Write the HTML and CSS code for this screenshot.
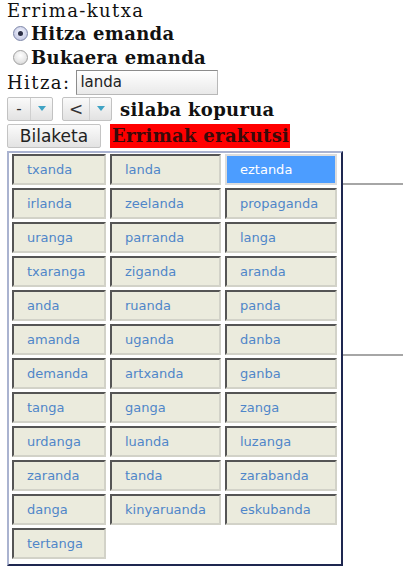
FILE: index.html
```html
<!DOCTYPE html>
<html lang="eu">
<head>
<meta charset="utf-8">
<title>Errima-kutxa</title>
<link rel="stylesheet" href="styles.css">
</head>
<body>
<form class="rhyme-form">
  <div class="title">Errima-kutxa</div>
  <label class="radio-row"><span class="radio checked"></span>Hitza emanda</label>
  <label class="radio-row"><span class="radio"></span>Bukaera emanda</label>
  <div class="word-row">
    <span class="word-label">Hitza:</span>
    <span class="text-input">landa</span>
  </div>
  <div class="syllable-row">
    <span class="select select-count"><span class="select-value">-</span><span class="select-arrow"></span></span>
    <span class="select select-op"><span class="select-value">&lt;</span><span class="select-arrow"></span></span>
    <span class="syllable-label">silaba kopurua</span>
  </div>
  <div class="action-row">
    <span class="button">Bilaketa</span>
    <span class="show-rhymes">Errimak erakutsi</span>
  </div>
</form>

<div class="results">
  <div class="rule rule-top"></div>
  <div class="rule rule-mid"></div>
  <div class="rhyme-grid">
    <div class="cell">txanda</div>
    <div class="cell">landa</div>
    <div class="cell active">eztanda</div>
    <div class="cell">irlanda</div>
    <div class="cell">zeelanda</div>
    <div class="cell">propaganda</div>
    <div class="cell">uranga</div>
    <div class="cell">parranda</div>
    <div class="cell">langa</div>
    <div class="cell">txaranga</div>
    <div class="cell">ziganda</div>
    <div class="cell">aranda</div>
    <div class="cell">anda</div>
    <div class="cell">ruanda</div>
    <div class="cell">panda</div>
    <div class="cell">amanda</div>
    <div class="cell">uganda</div>
    <div class="cell">danba</div>
    <div class="cell">demanda</div>
    <div class="cell">artxanda</div>
    <div class="cell">ganba</div>
    <div class="cell">tanga</div>
    <div class="cell">ganga</div>
    <div class="cell">zanga</div>
    <div class="cell">urdanga</div>
    <div class="cell">luanda</div>
    <div class="cell">luzanga</div>
    <div class="cell">zaranda</div>
    <div class="cell">tanda</div>
    <div class="cell">zarabanda</div>
    <div class="cell">danga</div>
    <div class="cell">kinyaruanda</div>
    <div class="cell">eskubanda</div>
    <div class="cell">tertanga</div>
  </div>
</div>
</body>
</html>
```

FILE: styles.css
```css
html, body {
  margin: 0;
  padding: 0;
  background: #fff;
}

body {
  padding: 0 0 0 7px;
  font-family: "DejaVu Serif", serif;
  font-size: 18px;
  color: #111;
}

.rhyme-form {
  display: flex;
  flex-direction: column;
}

.title {
  height: 21px;
  line-height: 21px;
  letter-spacing: 1.4px;
}

.radio-row {
  display: flex;
  align-items: center;
  height: 24px;
  padding-left: 6px;
  font-weight: bold;
  letter-spacing: 0.3px;
}

.radio {
  width: 15px;
  height: 15px;
  border-radius: 50%;
  border: 1px solid #a0a0a0;
  background: radial-gradient(circle at 50% 35%, #ffffff 0%, #e6e6e6 60%, #c6c6c6 100%);
  margin-right: 3px;
  position: relative;
  box-sizing: border-box;
}

.radio.checked {
  border-color: #7d86a8;
  background: radial-gradient(circle at 50% 40%, #f4f6ff 0%, #c9cde6 70%, #a3a9c8 100%);
}

.radio.checked::after {
  content: "";
  position: absolute;
  left: 4px;
  top: 4px;
  width: 5px;
  height: 5px;
  border-radius: 50%;
  background: #2c2f45;
}

.word-row {
  display: flex;
  align-items: center;
  height: 26px;
  gap: 6px;
}

.word-label {
  letter-spacing: 1.4px;
}

.text-input {
  width: 142px;
  height: 25px;
  box-sizing: border-box;
  border: 1px solid #b8b8b8;
  border-top-color: #8c8c8c;
  border-left-color: #8c8c8c;
  background: linear-gradient(#ffffff, #e9e9e9);
  font-family: "DejaVu Sans", sans-serif;
  font-size: 15px;
  line-height: 23px;
  padding-left: 3px;
  color: #222;
}

.syllable-row {
  display: flex;
  align-items: center;
  height: 28px;
  gap: 9px;
}

.select {
  display: flex;
  height: 24px;
  box-sizing: border-box;
  border: 1px solid #c2c2c2;
  border-radius: 2px;
  background: linear-gradient(#fafafa, #e2e2e2);
  font-family: "DejaVu Sans", sans-serif;
  font-size: 15px;
  color: #333;
}

.select-value {
  display: flex;
  align-items: center;
  justify-content: center;
  border-right: 1px solid #cfcfcf;
}

.select-count .select-value { width: 22px; }
.select-op .select-value { width: 26px; font-size: 17px; }

.select-arrow {
  width: 21px;
  position: relative;
}

.select-arrow::after {
  content: "";
  position: absolute;
  left: 7px;
  top: 8px;
  border-left: 4px solid transparent;
  border-right: 4px solid transparent;
  border-top: 5px solid #3fa3c4;
}

.syllable-label {
  font-weight: bold;
  letter-spacing: 0.3px;
  margin-left: -1px;
}

.action-row {
  display: flex;
  align-items: center;
  height: 26px;
  gap: 9px;
}

.button {
  width: 94px;
  height: 24px;
  box-sizing: border-box;
  border: 1px solid #c4c4c4;
  border-radius: 2px;
  background: linear-gradient(#fbfbfb, #e3e3e3);
  font-family: "DejaVu Sans", sans-serif;
  font-size: 17px;
  color: #222;
  display: flex;
  align-items: center;
  justify-content: center;
}

.show-rhymes {
  background: #ff0000;
  color: #3a0a0a;
  font-weight: bold;
  height: 24px;
  line-height: 24px;
  padding: 0 1px 0 2px;
  letter-spacing: 0.3px;
}

.results {
  position: relative;
  margin-top: 2px;
}

.rule {
  position: absolute;
  left: 330px;
  width: 80px;
  height: 2px;
  background: #a6a6a6;
}

.rule-top { top: 32px; }
.rule-mid { top: 203px; }

.rhyme-grid {
  position: relative;
  width: 336px;
  box-sizing: border-box;
  border: 2px solid;
  border-color: #aab3d0 #1e2750 #1e2750 #aab3d0;
  background: #fff;
  padding: 1px 4px 5px 3px;
  display: grid;
  grid-template-columns: 94px 111px 112px;
  grid-auto-rows: 31px;
  column-gap: 4px;
  row-gap: 3px;
}

.cell {
  box-sizing: border-box;
  border: 2px solid;
  border-color: #555 #d2d2c8 #d2d2c8 #555;
  background: #ebebdd;
  color: #4f86c9;
  font-family: "DejaVu Sans", sans-serif;
  font-size: 13px;
  display: flex;
  align-items: center;
  padding-left: 13px;
}

.cell.active {
  background: #4c9dff;
  border-color: #dcdcdc;
  color: #fff;
}
```
